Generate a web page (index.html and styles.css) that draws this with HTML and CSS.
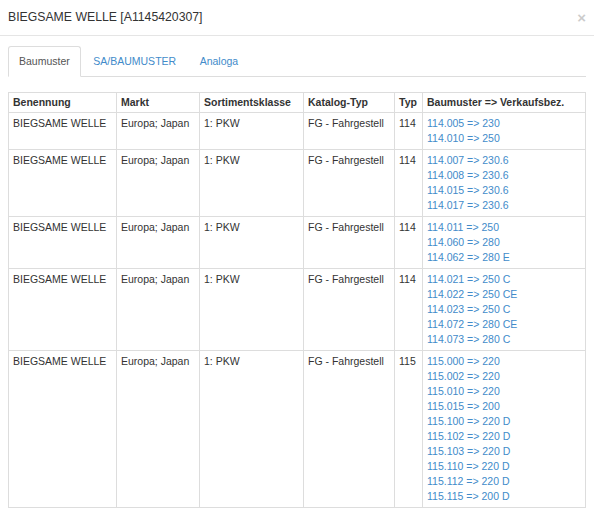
FILE: index.html
```html
<!DOCTYPE html>
<html lang="de">
<head>
<meta charset="utf-8">
<title>BIEGSAME WELLE</title>
<link rel="stylesheet" href="styles.css">
</head>
<body>
<div class="modal">
  <div class="modal-header">
    <h4 class="modal-title">BIEGSAME WELLE [A1145420307]</h4>
    <button class="close" type="button">&times;</button>
  </div>
  <div class="modal-body">
    <ul class="tabs">
      <li class="tab active"><a href="#">Baumuster</a></li>
      <li class="tab"><a href="#">SA/BAUMUSTER</a></li>
      <li class="tab"><a href="#">Analoga</a></li>
    </ul>
    <table class="grid">
      <colgroup>
        <col class="c-name"><col class="c-markt"><col class="c-sort"><col class="c-kat"><col class="c-typ"><col class="c-bm">
      </colgroup>
      <thead>
        <tr><th>Benennung</th><th>Markt</th><th>Sortimentsklasse</th><th>Katalog-Typ</th><th>Typ</th><th>Baumuster =&gt; Verkaufsbez.</th></tr>
      </thead>
      <tbody>
        <tr><td>BIEGSAME WELLE</td><td>Europa; Japan</td><td>1: PKW</td><td>FG - Fahrgestell</td><td>114</td>
          <td><a href="#">114.005 =&gt; 230</a><a href="#">114.010 =&gt; 250</a></td></tr>
        <tr><td>BIEGSAME WELLE</td><td>Europa; Japan</td><td>1: PKW</td><td>FG - Fahrgestell</td><td>114</td>
          <td><a href="#">114.007 =&gt; 230.6</a><a href="#">114.008 =&gt; 230.6</a><a href="#">114.015 =&gt; 230.6</a><a href="#">114.017 =&gt; 230.6</a></td></tr>
        <tr><td>BIEGSAME WELLE</td><td>Europa; Japan</td><td>1: PKW</td><td>FG - Fahrgestell</td><td>114</td>
          <td><a href="#">114.011 =&gt; 250</a><a href="#">114.060 =&gt; 280</a><a href="#">114.062 =&gt; 280 E</a></td></tr>
        <tr><td>BIEGSAME WELLE</td><td>Europa; Japan</td><td>1: PKW</td><td>FG - Fahrgestell</td><td>114</td>
          <td><a href="#">114.021 =&gt; 250 C</a><a href="#">114.022 =&gt; 250 CE</a><a href="#">114.023 =&gt; 250 C</a><a href="#">114.072 =&gt; 280 CE</a><a href="#">114.073 =&gt; 280 C</a></td></tr>
        <tr><td>BIEGSAME WELLE</td><td>Europa; Japan</td><td>1: PKW</td><td>FG - Fahrgestell</td><td>115</td>
          <td><a href="#">115.000 =&gt; 220</a><a href="#">115.002 =&gt; 220</a><a href="#">115.010 =&gt; 220</a><a href="#">115.015 =&gt; 200</a><a href="#">115.100 =&gt; 220 D</a><a href="#">115.102 =&gt; 220 D</a><a href="#">115.103 =&gt; 220 D</a><a href="#">115.110 =&gt; 220 D</a><a href="#">115.112 =&gt; 220 D</a><a href="#">115.115 =&gt; 200 D</a></td></tr>
      </tbody>
    </table>
  </div>
</div>
</body>
</html>
```

FILE: styles.css
```css
* { box-sizing: border-box; }
html, body {
  margin: 0;
  padding: 0;
  background: #fff;
}
body {
  font-family: "Liberation Sans", Arial, Helvetica, sans-serif;
  font-size: 10.5px;
  line-height: 15px;
  color: #333;
}
a {
  color: #428bca;
  text-decoration: none;
}
.modal {
  width: 594px;
}
.modal-header {
  display: flex;
  align-items: center;
  justify-content: space-between;
  padding: 10px 8px;
  border-bottom: 1px solid #e5e5e5;
}
.modal-title {
  margin: 0;
  font-size: 12.25px;
  line-height: 15px;
  font-weight: normal;
  color: #333;
}
.close {
  border: 0;
  background: transparent;
  padding: 0;
  margin: 0;
  font-family: "Liberation Sans", Arial, sans-serif;
  font-size: 15px;
  font-weight: bold;
  line-height: 15px;
  color: #000;
  opacity: 0.2;
  cursor: pointer;
}
.modal-body {
  padding: 10px 8px 9px;
}
.tabs {
  display: flex;
  list-style: none;
  margin: 0 0 15px;
  padding: 0;
  border-bottom: 1px solid #ddd;
}
.tab {
  margin-right: 1.5px;
  margin-bottom: -1px;
}
.tab a {
  display: block;
  padding: 7px 10px;
  line-height: 15px;
  border: 1px solid transparent;
  border-radius: 3px 3px 0 0;
}
.tab.active a {
  color: #555;
  background: #fff;
  border-color: #ddd #ddd transparent;
}
.grid {
  width: 578px;
  border-collapse: collapse;
  table-layout: fixed;
  border: 1px solid #ddd;
}
.c-name { width: 108px; }
.c-markt { width: 83px; }
.c-sort { width: 104px; }
.c-kat { width: 91px; }
.c-typ { width: 28px; }
.grid th,
.grid td {
  border: 1px solid #ddd;
  padding: 3px 4px;
  text-align: left;
  vertical-align: top;
  white-space: nowrap;
}
.grid th {
  font-weight: bold;
  padding: 2px 4px;
}
.grid td a {
  display: block;
}
```
